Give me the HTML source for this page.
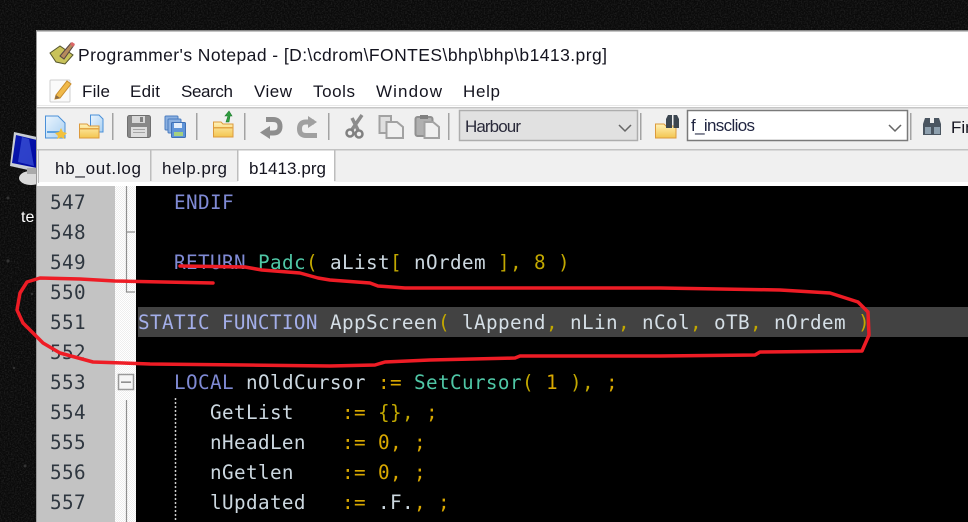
<!DOCTYPE html>
<html><head><meta charset="utf-8"><title>Programmer's Notepad</title>
<style>
html,body{margin:0;padding:0;background:#0a0a0a;width:968px;height:522px;overflow:hidden}
svg{display:block;filter:blur(.3px)}
.ui{font-family:"Liberation Sans",sans-serif;font-size:17px;fill:#14141f}
.m{font-family:"DejaVu Sans Mono","Liberation Mono",monospace;font-size:19.3px;letter-spacing:.38px;white-space:pre}
.n{fill:#2f3740}.k{fill:#7f8ad4}.i{fill:#ccd8e0}.f{fill:#4fc7a6}.y{fill:#c2a800}.o{fill:#d9a800}
.k2{fill:#a3aee8}.i2{fill:#d5dfe6}
</style></head><body>
<svg width="968" height="522" viewBox="0 0 968 522" xmlns="http://www.w3.org/2000/svg">
<defs>
<linearGradient id="b" x1="0" y1="0" x2="1" y2="1"><stop offset="0" stop-color="#eaf4fd"/><stop offset="1" stop-color="#a9d0f2"/></linearGradient>
<linearGradient id="fo" x1="0" y1="0" x2="0" y2="1"><stop offset="0" stop-color="#fff2b8"/><stop offset="1" stop-color="#f3c54f"/></linearGradient>
<linearGradient id="sc" x1="0" y1="0" x2="1" y2="1"><stop offset="0" stop-color="#0a1ab0"/><stop offset="1" stop-color="#0008a0"/></linearGradient>
<pattern id="dit" width="2" height="2" patternUnits="userSpaceOnUse"><rect width="2" height="2" fill="#fff"/><rect width="1" height="1" fill="#eee"/><rect x="1" y="1" width="1" height="1" fill="#eee"/></pattern>
<filter id="noise" x="0" y="0" width="100%" height="100%"><feTurbulence type="fractalNoise" baseFrequency=".7" numOctaves="2" seed="4"/><feColorMatrix values="0 0 0 0 .5  0 0 0 0 .5  0 0 0 0 .5  .3 0 0 0 -.12"/></filter>
</defs>

<!-- desktop -->
<rect width="968" height="522" fill="#0a0a0a"/>
<rect width="968" height="522" filter="url(#noise)"/>
<g fill="#333"><circle cx="8" cy="198" r="1.500"/><circle cx="8" cy="261" r="1.600"/><circle cx="32" cy="294" r="1.200"/><circle cx="25" cy="466" r="1.500"/><circle cx="14" cy="368" r="1.200"/></g>
<path d="M14 132 L37 137 V172 L10 166 Z" fill="#c9ced4"/>
<path d="M16 135 L37 140 V168 L12 163 Z" fill="url(#sc)"/>
<path d="M22 137 L29 139 L34 166 L18 162 Z" fill="#3f55d8" opacity=".7"/>
<ellipse cx="31" cy="178" rx="12" ry="7" fill="#d9d9d9"/>
<rect x="27" y="168" width="10" height="6" fill="#aaa"/>
<text x="21" y="222" font-family="Liberation Sans,sans-serif" font-size="16" fill="#fff">te</text>

<!-- window -->
<rect x="36" y="30" width="932" height="492" fill="#fff"/>
<rect x="36" y="30" width="932" height="1.500" fill="#8a8a8a"/>
<rect x="36" y="30" width="1" height="492" fill="#9a9a9a"/>

<!-- title icon -->
<path d="M50 53 L60 46 L73 55 L65 64 L56 62 Z" fill="#c8c25a" stroke="#55552c"/>
<path d="M60 56 L71 43 L74 45 L64 59 Z" fill="#b58a5c" stroke="#544"/>
<path d="M70 44 L72 42 L75 44 L73 47 Z" fill="#d66"/>
<text class="ui" x="78" y="61" textLength="529" style="font-size:17.5px">Programmer's Notepad - [D:\cdrom\FONTES\bhp\bhp\b1413.prg]</text>

<!-- menu -->
<rect x="50" y="80" width="20" height="22" rx="1" fill="#fafafa" stroke="#cfcfcf"/>
<path d="M56 95 L67 81 L71 84 L60 98 L55 99 Z" fill="#f0b94a" stroke="#c98d2d"/>
<path d="M55 99 L56 95 L60 98 Z" fill="#8a6a44"/>
<g class="ui">
<text x="82" y="97" textLength="28">File</text>
<text x="130" y="97" textLength="30">Edit</text>
<text x="181" y="97" textLength="52">Search</text>
<text x="254" y="97" textLength="38">View</text>
<text x="313" y="97" textLength="42">Tools</text>
<text x="376" y="97" textLength="66">Window</text>
<text x="463" y="97" textLength="37">Help</text>
</g>

<!-- toolbar -->
<rect x="37" y="105" width="931" height="1" fill="#e8e8e8"/>
<rect x="37" y="107" width="931" height="44" fill="#f0f0f0"/>
<rect x="37" y="107" width="931" height="1.500" fill="#c6c6c6"/>
<rect x="37" y="149" width="931" height="1.500" fill="#c2c2c2"/>
<g fill="#a3a3a3">
<rect x="112" y="113" width="1.500" height="27"/><rect x="196" y="113" width="1.500" height="27"/><rect x="244" y="113" width="1.500" height="27"/><rect x="328" y="113" width="1.500" height="27"/><rect x="448" y="113" width="1.500" height="27"/><rect x="640" y="113" width="1.500" height="27"/><rect x="910" y="113" width="1.500" height="27"/>
</g>
<!-- new -->
<path d="M45.500 116 H58 L65 123 V138 H45.500 Z" fill="url(#b)" stroke="#4a90d8"/>
<rect x="47" y="131" width="13" height="2" fill="#5aa0e0"/>
<path d="M61 128 L63 132 L67 133 L64 136 L65 139 L61 137.500 L57 139 L58 136 L55 133 L59 132 Z" fill="#f2c13d"/>
<!-- open -->
<path d="M90.500 115 H99 L103 119 V132 H90.500 Z" fill="url(#b)" stroke="#4a90d8"/>
<path d="M79.500 124 H87 L89 126 H99 V138 H79.500 Z" fill="url(#fo)" stroke="#dc9a3c"/>
<rect x="80" y="128" width="19" height="1.500" fill="#e2a545"/>
<!-- save -->
<rect x="127.500" y="115.500" width="23" height="22" rx="2" fill="#888" stroke="#707070"/>
<rect x="132" y="116" width="13" height="7" fill="#d8d8d8"/><rect x="140" y="117" width="3" height="5" fill="#808080"/>
<rect x="131" y="127" width="16" height="10" fill="#dedede"/><rect x="133" y="129" width="12" height="1" fill="#a5a5a5"/><rect x="133" y="132" width="12" height="1" fill="#a5a5a5"/>
<!-- save all -->
<rect x="165" y="116" width="13" height="14" rx="1" fill="#8bb0e0" stroke="#4a7cc0"/>
<rect x="168" y="119" width="13" height="14" rx="1" fill="#8bb0e0" stroke="#4a7cc0"/>
<rect x="171.500" y="122.500" width="14" height="15" rx="1" fill="#5f94d8" stroke="#3f70b5"/>
<rect x="174" y="123" width="8" height="5" fill="#e4eefa"/><rect x="174" y="132" width="9" height="4" fill="#a5d080"/>
<!-- recent folder -->
<path d="M213.500 122 H221 L223 124 H233 V137 H213.500 Z" fill="url(#fo)" stroke="#dc9a3c"/>
<rect x="214" y="127" width="19" height="1.500" fill="#e2a545"/>
<path d="M226 122 L228 116 L225 116 L229 111 L232 116 L230 116 L229 122 Z" fill="#2f9e3f" stroke="#1c7a2c" stroke-width=".6"/>
<!-- undo / redo -->
<path d="M266 119.500 H273 Q280 119.500 280 126.500 Q280 133 273 133 H268" fill="none" stroke="#8e8e8e" stroke-width="5"/>
<path d="M270 126 V139 L260 132.500 Z" fill="#8e8e8e"/>
<path d="M314 122 H306 Q299.500 122 299.500 129 Q299.500 135.500 306 135.500 H317" fill="none" stroke="#a0a0a0" stroke-width="5"/>
<path d="M308 116 V128 L317 122 Z" fill="#a0a0a0"/>
<!-- cut -->
<path d="M362 115 L351 131 M352 118 L358 130" stroke="#8c8c8c" stroke-width="3.500" fill="none"/>
<circle cx="350" cy="133" r="3.500" fill="none" stroke="#808080" stroke-width="2.500"/><circle cx="359" cy="134" r="3.500" fill="none" stroke="#808080" stroke-width="2.500"/>
<!-- copy -->
<path d="M379.500 116 H391 V133 H379.500 Z" fill="#dfdfdf" stroke="#a2a2a2" stroke-width="2"/>
<path d="M386.500 122 H397 L403 127 V138 H386.500 Z" fill="#f0f0f0" stroke="#a2a2a2" stroke-width="2"/>
<!-- paste -->
<rect x="415.500" y="117" width="17" height="19" rx="2" fill="#b0b0b0" stroke="#909090" stroke-width="2"/>
<rect x="420" y="115" width="8" height="4" fill="#808080"/>
<path d="M424.500 122 H433 L439 127 V138 H424.500 Z" fill="#f0f0f0" stroke="#a2a2a2" stroke-width="2"/>

<!-- combos -->
<rect x="459.500" y="110.500" width="178" height="30" fill="#e1e1e1" stroke="#adadad" stroke-width="1.500"/>
<text class="ui" x="465" y="132" textLength="56" style="fill:#2a2a3a">Harbour</text>
<path d="M619 125 L625 131 L631 125" fill="none" stroke="#666" stroke-width="1.500"/>
<path d="M655.500 124 H664 L666 126 H676 V138 H655.500 Z" fill="url(#fo)" stroke="#dc9a3c"/>
<path d="M666 128 V119 L668 115 H672 V128 Z M673.500 128 V115 H677 L679 119 V128 Z" fill="#3c4650"/>
<rect x="687.500" y="110.500" width="220" height="30" fill="#fff" stroke="#7a7a7a" stroke-width="1.500"/>
<text class="ui" x="691" y="131" textLength="64" style="fill:#1f2440">f_insclios</text>
<path d="M889 125 L895 131 L901 125" fill="none" stroke="#666" stroke-width="1.500"/>
<path d="M923 124 L925 118 H930 V123 H934 V118 H939 L941 124 V135 H923 Z" fill="#4a5560"/>
<rect x="925" y="127" width="6" height="7" fill="#8ea0ae"/><rect x="934" y="127" width="6" height="7" fill="#8ea0ae"/>
<text class="ui" x="951" y="133">Find</text>

<!-- tabs -->
<rect x="37" y="150.500" width="931" height="32" fill="#f0f0f0"/>
<rect x="37" y="182" width="931" height="4" fill="#fff"/>
<rect x="238" y="150.500" width="96" height="32" fill="#fff"/>
<g fill="#bdbdbd"><rect x="38" y="150" width="1" height="33"/><rect x="150" y="150" width="1.500" height="31"/><rect x="237" y="150" width="1.500" height="31"/><rect x="334" y="150" width="1.500" height="31"/></g>
<g class="ui">
<text x="55" y="174" textLength="86">hb_out.log</text>
<text x="162" y="174" textLength="65">help.prg</text>
<text x="249" y="174" textLength="77">b1413.prg</text>
</g>

<!-- margins -->
<rect x="37" y="186" width="78" height="336" fill="#c3c3c3"/>
<rect x="115" y="186" width="21" height="336" fill="url(#dit)"/>
<rect x="136" y="186" width="832" height="336" fill="#000"/>
<path d="M126.500 186 V232 H135 M126.500 232 V292 H135" fill="none" stroke="#8f8f8f" stroke-width="1.200"/>
<path d="M126.500 400 V522" stroke="#8f8f8f" stroke-width="1.200"/>
<rect x="118.500" y="374.500" width="15" height="15" fill="#f5f5f5" stroke="#999" stroke-width="1.500"/>
<rect x="121" y="381.500" width="10" height="1.300" fill="#777"/>
<path d="M175.500 398 V522" stroke="#ccc" stroke-width="1.500" stroke-dasharray="2 2"/>

<!-- current line -->
<rect x="138" y="307" width="830" height="30" fill="#424242"/>

<!-- line numbers -->
<g class="m n">
<text x="50" y="209">547</text><text x="50" y="239">548</text><text x="50" y="269">549</text><text x="50" y="299">550</text><text x="50" y="329">551</text><text x="50" y="359">552</text><text x="50" y="389">553</text><text x="50" y="419">554</text><text x="50" y="449">555</text><text x="50" y="479">556</text><text x="50" y="509">557</text>
</g>

<!-- code -->
<g class="m">
<text x="174" y="209" class="k">ENDIF</text>
<text x="174" y="269" class="k">RETURN</text>
<text x="258" y="269" class="f">Padc</text><text x="306" y="269" class="y">(</text>
<text x="330" y="269" class="i">aList</text><text x="390" y="269" class="y">[</text>
<text x="414" y="269" class="i">nOrdem</text><text x="498" y="269" class="y">],</text>
<text x="534" y="269" class="y">8</text><text x="558" y="269" class="y">)</text>

<text x="138" y="329" class="k2">STATIC FUNCTION</text>
<text x="330" y="329" class="i2">AppScreen</text><text x="438" y="329" class="y">(</text>
<text x="462" y="329" class="i2">lAppend</text><text x="546" y="329" class="y">,</text>
<text x="570" y="329" class="i2">nLin</text><text x="618" y="329" class="y">,</text>
<text x="642" y="329" class="i2">nCol</text><text x="690" y="329" class="y">,</text>
<text x="714" y="329" class="i2">oTB</text><text x="750" y="329" class="y">,</text>
<text x="774" y="329" class="i2">nOrdem</text><text x="858" y="329" class="y">)</text>

<text x="174" y="389" class="k">LOCAL</text>
<text x="246" y="389" class="i">nOldCursor</text><text x="378" y="389" class="o">:=</text>
<text x="414" y="389" class="f">SetCursor</text><text x="522" y="389" class="y">(</text>
<text x="546" y="389" class="o">1</text><text x="570" y="389" class="y">),</text><text x="606" y="389" class="o">;</text>

<text x="210" y="419" class="i">GetList</text><text x="342" y="419" class="o">:=</text><text x="378" y="419" class="y">{},</text><text x="426" y="419" class="o">;</text>
<text x="210" y="449" class="i">nHeadLen</text><text x="342" y="449" class="o">:=</text><text x="378" y="449" class="o">0,</text><text x="414" y="449" class="o">;</text>
<text x="210" y="479" class="i">nGetlen</text><text x="342" y="479" class="o">:=</text><text x="378" y="479" class="o">0,</text><text x="414" y="479" class="o">;</text>
<text x="210" y="509" class="i">lUpdated</text><text x="342" y="509" class="o">:=</text><text x="378" y="509" class="i">.F.</text><text x="414" y="509" class="o">,</text><text x="438" y="509" class="o">;</text>
</g>

<!-- red annotation -->
<path d="M180 266 L245 267 L262 270 L300 273 L318 278 L330 280 L370 283 L378 286 L405 288 L660 288 L720 289 L780 290 L830 293 L858 302 L868 312 L869 335 L862 351 L760 352 L755 355 L660 356 L520 356 L515 358 L430 360 L385 362 L375 365 L330 366 L150 364 L123 363 L93 362 L60 353 L43 343 L23 323 L17 310 L20 293 L27 282 L40 278 L80 279 L115 281 L213 283" fill="none" stroke="#ee1c25" stroke-width="3.500" stroke-linejoin="round" stroke-linecap="round"/>
</svg>
</body></html>
